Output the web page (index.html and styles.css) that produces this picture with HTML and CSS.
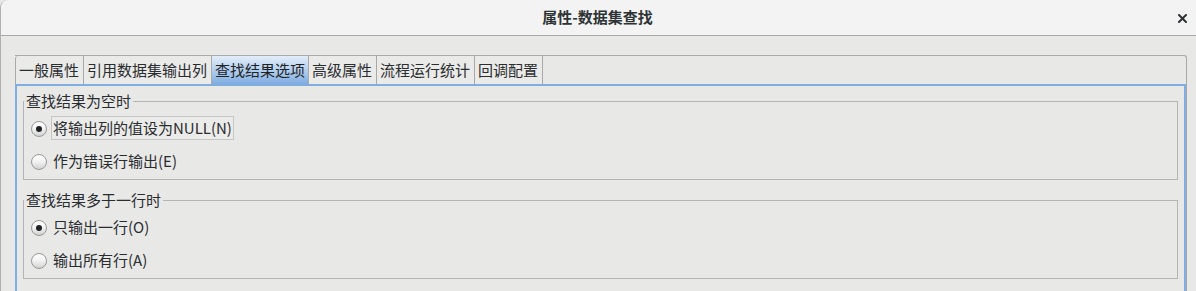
FILE: index.html
```html
<!DOCTYPE html>
<html lang="zh-CN">
<head>
<meta charset="utf-8">
<title>属性-数据集查找</title>
<link rel="stylesheet" href="styles.css">
</head>
<body>
<div class="window">
  <header class="titlebar">
    <span></span>
    <span class="title">属性-数据集查找</span>
    <span class="close" aria-label="关闭">
      <svg width="9" height="9" viewBox="0 0 9 9"><path d="M1 1 L8 8 M8 1 L1 8" stroke="#2e3436" stroke-width="2" stroke-linecap="square" fill="none"/></svg>
    </span>
  </header>
  <main class="content">
    <div class="tabstrip">
      <div class="tab first">一般属性</div>
      <div class="tab">引用数据集输出列</div>
      <div class="tab selected">查找结果选项</div>
      <div class="tab">高级属性</div>
      <div class="tab">流程运行统计</div>
      <div class="tab last">回调配置</div>
    </div>
    <section class="panel">
      <fieldset class="group first-group">
        <legend>查找结果为空时</legend>
        <div class="radio-row">
          <span class="radio checked"></span>
          <span class="label focus">将输出列的值设为NULL(N)</span>
        </div>
        <div class="radio-row second">
          <span class="radio"></span>
          <span class="label">作为错误行输出(E)</span>
        </div>
      </fieldset>
      <fieldset class="group">
        <legend>查找结果多于一行时</legend>
        <div class="radio-row">
          <span class="radio checked"></span>
          <span class="label">只输出一行(O)</span>
        </div>
        <div class="radio-row second">
          <span class="radio"></span>
          <span class="label">输出所有行(A)</span>
        </div>
      </fieldset>
    </section>
  </main>
</div>
</body>
</html>
```

FILE: styles.css
```css
* { box-sizing: border-box; }

html, body {
  margin: 0;
  padding: 0;
  background: #e8e8e7;
}

body {
  font-family: "Noto Sans CJK SC", "Noto Sans", sans-serif;
  font-size: 15px;
  color: #2a2d2f;
}

.window {
  width: 1196px;
  height: 291px;
  overflow: hidden;
  display: flex;
  flex-direction: column;
  border-left: 1px solid #b0b0b0;
  border-top-left-radius: 8px;
  background: #e8e8e7;
}

.titlebar {
  height: 36px;
  flex: none;
  display: grid;
  grid-template-columns: 1fr auto 1fr;
  align-items: center;
  background: #f3f3f3;
  border-bottom: 1px solid #a9a9a9;
  border-top-left-radius: 7px;
}

.title {
  font-weight: bold;
  font-size: 15px;
  line-height: 20px;
  color: #2e3436;
  padding-bottom: 1px;
  margin-left: -2px;
}

.close {
  justify-self: end;
  margin-right: 9px;
  display: flex;
  align-items: center;
  padding-top: 1px;
}

.content {
  flex: 1;
  display: flex;
  flex-direction: column;
  padding: 19px 9px 0 14px;
  min-height: 0;
}

.tabstrip {
  display: flex;
  height: 29px;
  flex: none;
  border-top: 1px solid #a9a9a9;
  border-right: 1px solid #a9a9a9;
  border-top-right-radius: 3px;
}

.tab {
  height: 28px;
  line-height: 28px;
  padding: 0 4px 0 3px;
  border-left: 1px solid #a9a9a9;
  background: #eaeae9;
  color: #2a2d2f;
  white-space: nowrap;
}

.tab.first { border-top-left-radius: 3px; }
.tab.last { border-right: 1px solid #a9a9a9; }

.tab.selected {
  padding: 0 3px 0 3px;
  background: linear-gradient(to bottom, #e2edf9 0%, #b9d3f0 45%, #7eace0 100%);
  color: #1e2326;
}

.panel {
  flex: 1;
  margin-right: 1px;
  border: 2px solid #80aee1;
  box-shadow: 1px 0 0 #a9a9a9;
  padding: 0 6px;
  min-height: 240px;
}

.group {
  margin: 12px 0 0 0;
  min-width: 0;
  border: 1px solid #b4b4b4;
  padding: 7px 0 6px 0;
}

.group.first-group { margin-top: 7px; }

.group legend {
  padding: 0 2px;
  margin-left: 0;
  line-height: 16px;
  font-size: 15px;
  color: #2a2d2f;
}

.radio-row {
  display: flex;
  align-items: center;
  height: 24px;
  margin-left: 7px;
}

.radio-row.second { margin-top: 9px; }

.radio {
  width: 16px;
  height: 16px;
  flex: none;
  border-radius: 50%;
  border: 1px solid #999999;
  background: linear-gradient(to bottom, #ffffff 0%, #f3f3f3 45%, #d2d2d2 100%);
  display: flex;
  align-items: center;
  justify-content: center;
  margin-top: 1px;
}

.radio.checked::after {
  content: "";
  width: 6px;
  height: 6px;
  border-radius: 50%;
  background: #1f2224;
}

.label {
  margin-left: 4px;
  height: 24px;
  line-height: 22px;
  padding: 0 1px 0 1px;
  border: 1px solid transparent;
  white-space: nowrap;
}

.label.focus {
  border-color: #c6c6c6;
  background: #ebebea;
}
```
